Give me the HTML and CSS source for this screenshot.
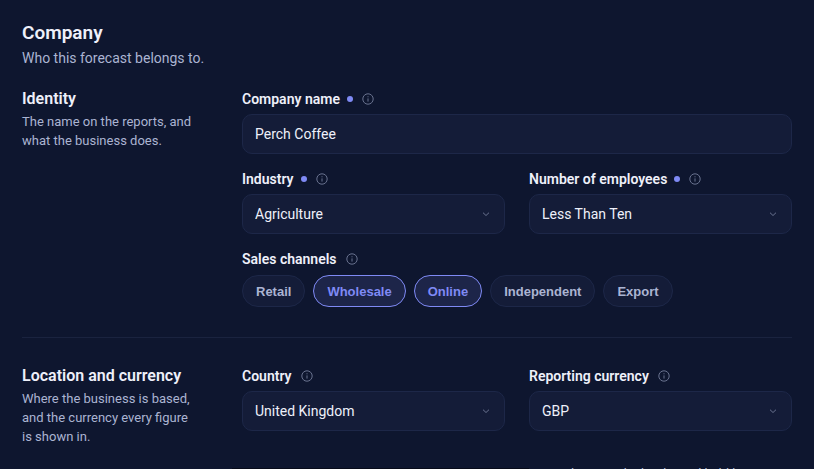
FILE: index.html
```html
<!DOCTYPE html>
<html lang="en">
<head>
<meta charset="UTF-8">
<meta name="viewport" content="width=device-width, initial-scale=1.0">
<title>Company - Forecast</title>
<link rel="stylesheet" href="styles.css">
</head>
<body>
<svg class="sprite" aria-hidden="true">
<symbol id="info" viewBox="0 0 12 12"><circle cx="6" cy="6" r="5.2"/><path d="M6 5.4V8.6M6 3.3V4.3"/></symbol>
<symbol id="chevron" viewBox="0 0 8 8"><path d="M1 2.7L4 5.5L7 2.7"/></symbol>
</svg>
<main class="page">
<h1>Company</h1>
<p class="lead">Who this forecast belongs to.</p>

<section class="section">
<div class="about">
<h2>Identity</h2>
<p>The name on the reports, and what the business does.</p>
</div>
<div class="fields">
<div class="field wide">
<div class="label"><label for="name">Company name</label><span class="dot"></span><svg class="info"><use href="#info"/></svg></div>
<input id="name" class="control" value="Perch Coffee">
</div>
<div class="field">
<div class="label"><label for="industry">Industry</label><span class="dot"></span><svg class="info"><use href="#info"/></svg></div>
<div class="select"><select id="industry" class="control"><option>Agriculture</option></select><svg class="chevron"><use href="#chevron"/></svg></div>
</div>
<div class="field">
<div class="label"><label for="employees">Number of employees</label><span class="dot"></span><svg class="info"><use href="#info"/></svg></div>
<div class="select"><select id="employees" class="control"><option>Less Than Ten</option></select><svg class="chevron"><use href="#chevron"/></svg></div>
</div>
<div class="field wide">
<div class="label"><span id="channels">Sales channels</span><svg class="info"><use href="#info"/></svg></div>
<div class="chips" role="group" aria-labelledby="channels">
<button type="button" class="chip" aria-pressed="false">Retail</button>
<button type="button" class="chip on" aria-pressed="true">Wholesale</button>
<button type="button" class="chip on" aria-pressed="true">Online</button>
<button type="button" class="chip" aria-pressed="false">Independent</button>
<button type="button" class="chip" aria-pressed="false">Export</button>
</div>
</div>
</div>
</section>

<section class="section">
<div class="about">
<h2>Location and currency</h2>
<p>Where the business is based, and the currency every figure is shown in.</p>
</div>
<div class="fields">
<div class="field">
<div class="label"><label for="country">Country</label><svg class="info"><use href="#info"/></svg></div>
<div class="select"><select id="country" class="control"><option>United Kingdom</option></select><svg class="chevron"><use href="#chevron"/></svg></div>
</div>
<div class="field">
<div class="label"><label for="currency">Reporting currency</label><svg class="info"><use href="#info"/></svg></div>
<div class="select"><select id="currency" class="control"><option>GBP</option></select><svg class="chevron"><use href="#chevron"/></svg></div>
</div>
<div class="panel"></div>
<p class="hint">as used across the books and held here</p>
</div>
</section>
</main>
<script>
document.querySelectorAll('.chip').forEach(chip=>{
    chip.addEventListener('click',()=>{
        const on=chip.classList.toggle('on');
        chip.setAttribute('aria-pressed',on);
    });
});
</script>
</body>
</html>
```
FILE: styles.css
```css
*{box-sizing:border-box;}
body{margin:0;font-family:Roboto,sans-serif;font-size:14px;background:#0e162f;color:#eef0fa;}
h1,h2,p{margin:0;}
.sprite{display:none;}
.page{height:100vh;overflow:hidden;padding:22px 22px 0;}
h1{font-size:19px;line-height:22px;font-weight:600;}
.lead{margin-top:4px;font-size:14px;line-height:20px;color:#abb4d2;}
.section{display:grid;grid-template-columns:180px 1fr;column-gap:40px;padding:22px 0 30px;}
.section + .section{border-top:1px solid #1a233f;padding-top:29px;}
.about h2{font-size:16px;line-height:18px;font-weight:600;white-space:nowrap;}
.about p{max-width:176px;margin-top:4px;font-size:13px;line-height:19px;color:#abb4d2;}
.fields{display:grid;grid-template-columns:1fr 1fr;gap:16px 24px;align-content:start;}
.wide{grid-column:1 / -1;}
.label{display:flex;align-items:center;height:18px;margin-bottom:6px;font-size:14px;font-weight:600;}
.dot{width:6px;height:6px;margin-left:7px;border-radius:50%;background:#7f8af5;}
.info{width:12px;height:12px;margin-left:9px;fill:none;stroke:#69728f;stroke-width:1;}
.control{display:block;width:100%;height:40px;margin:0;padding:0 12px;border:1px solid #1d2748;border-radius:10px;background:#141c38;color:#eef0fa;font:inherit;appearance:none;}
.select{display:grid;align-items:center;}
.select > *{grid-area:1 / 1;}
.chevron{width:8px;height:8px;margin-right:15px;justify-self:end;fill:none;stroke:#69728f;stroke-width:1;pointer-events:none;}
.chips{display:flex;flex-wrap:wrap;gap:8px;padding-top:1px;}
.chip{height:32px;padding:0 13px;border:1px solid #1d2748;border-radius:16px;background:#141c38;color:#abb4d2;font:bold 13px "Liberation Sans",Arial,sans-serif;cursor:pointer;}
.chip.on{border-color:#7f8af5;background:#1d2549;color:#7f8af5;}
.panel{margin:21px -24px 0 -10px;background:#070b1a;}
.hint{margin-top:17px;font-size:13px;line-height:19px;color:#abb4d2;}
```
